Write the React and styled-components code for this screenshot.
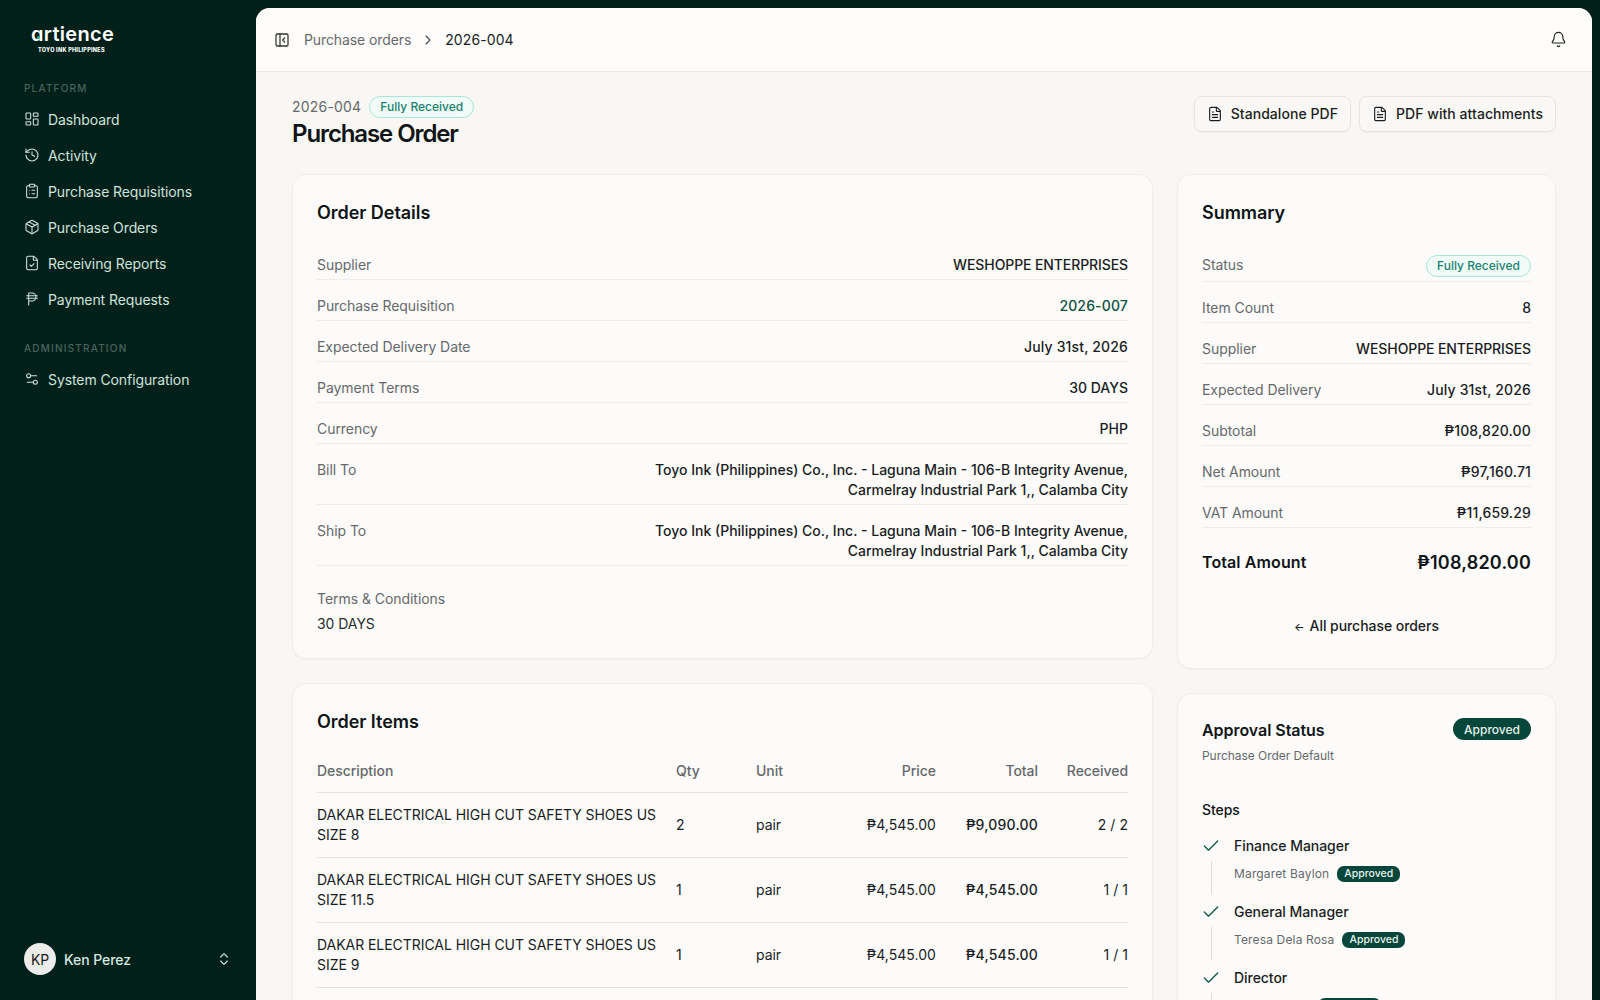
import React from "react";
import styled, { createGlobalStyle } from "styled-components";
import {
  LayoutDashboard, History, ClipboardList, Package, FileCheck, PhilippinePeso,
  Settings2, ChevronsUpDown, PanelLeftClose, Bell, FileText, Check, ChevronRight,
} from "lucide-react";

const Global = createGlobalStyle`
  html, body { margin: 0; padding: 0; height: 100%; overflow: hidden; background: #02201a; }
  body { font-family: Inter, "Liberation Sans", sans-serif; font-size: 14px; color: #0f1417; letter-spacing: -0.05px; }
  * { box-sizing: border-box; }
`;

const Shell = styled.div`display: flex; height: 1000px; overflow: hidden; background: #02201a;`;
const Sidebar = styled.aside`width: 256px; flex: none; display: flex; flex-direction: column; padding: 0 16px; color: #cfe3da;`;
const Logo = styled.div`height: 64px; padding: 22px 0 0 15px; display: flex; flex-direction: column; align-items: flex-start; color: #fff;`;
const LogoWord = styled.div`position: relative; font-size: 20px; line-height: 24px; font-weight: 600; letter-spacing: 0.3px; font-family: Inter, sans-serif;`;
const LogoDot = styled.span`position: absolute; left: 6px; top: 14px; width: 3px; height: 3px; border-radius: 50%; background: #2bb594;`;
const LogoSub = styled.div`font-size: 5.5px; line-height: 8px; font-weight: 800; letter-spacing: 0.25px; margin-left: 7px; margin-top: 0;`;
const NavLabel = styled.div`font-size: 10px; line-height: 16px; font-weight: 500; letter-spacing: 1.2px; color: #49635b; padding: 0 8px; margin-top: ${(p) => p.$mt}px; margin-bottom: 5px;`;
const NavItem = styled.div`display: flex; align-items: center; gap: 8px; height: 36px; padding: 0 8px; font-size: 14px; letter-spacing: -0.09px; color: #cfe3da; svg { flex: none; }`;
const Foot = styled.div`margin-top: auto; display: flex; align-items: center; padding: 0 8px; height: 32px; margin-bottom: 25px; gap: 8px;`;
const Avatar = styled.div`width: 32px; height: 32px; border-radius: 50%; background: #edecea; color: #1a1a1a; display: flex; align-items: center; justify-content: center; font-size: 14px;`;
const FootName = styled.div`flex: 1; font-size: 14px; font-weight: 500; color: #d5e8e0;`;

const Main = styled.main`flex: 1; min-width: 0; margin: 8px 8px 0 0; background: #f8f7f4; border-radius: 14px 14px 0 0; overflow: hidden;`;
const Header = styled.header`height: 64px; display: flex; align-items: center; padding: 0 25px 0 18px; background: #fdfcfa; border-bottom: 1px solid #e9e7e2;`;
const Crumbs = styled.div`display: flex; align-items: center; font-size: 14px; margin-left: 14px; flex: 1; color: #66696c; letter-spacing: -0.1px;`;
const CrumbSep = styled.span`display: flex; margin: 0 9px; color: #44474a;`;
const CrumbNow = styled.span`color: #1a1c1e; letter-spacing: 0.1px;`;

const Content = styled.div`padding: 24px 36px;`;
const TitleRow = styled.div`display: flex; justify-content: space-between; align-items: flex-start; margin-bottom: 24px;`;
const TitleMeta = styled.div`display: flex; align-items: center; gap: 8px; font-size: 14px; line-height: 22px; color: #66696c; letter-spacing: 0.2px;`;
const H1 = styled.h1`margin: 0; font-size: 24px; line-height: 32px; font-weight: 600; letter-spacing: -1.1px; color: #0f1417;`;
const Buttons = styled.div`display: flex; gap: 8px;`;
const Button = styled.button`height: 36px; display: flex; align-items: center; gap: 8px; padding: 0 12px 1px; font: 500 14px Inter, sans-serif; letter-spacing: 0.05px; color: #1b1e20; background: #f9f8f6; border: 1px solid #e6e4df; border-radius: 8px; box-shadow: 0 1px 2px rgba(0,0,0,.04);`;
const Soft = styled.span`display: inline-flex; align-items: center; height: 22px; padding: 0 10px; border-radius: 999px; font-size: 12px; font-weight: 500; letter-spacing: 0; color: #1a8273; background: #f1fbf8; border: 1px solid #a9e8d8;`;

const Grid = styled.div`display: grid; grid-template-columns: minmax(0, 1fr) 379px; gap: 24px; align-items: start;`;
const Column = styled.div`display: flex; flex-direction: column; gap: 24px;`;
const Card = styled.section`background: #fcfbf9; border: 1px solid #f0eeea; border-radius: 14px; padding: 24px; box-shadow: 0 1px 2px rgba(0,0,0,.025);`;
const CardTitle = styled.h2`margin: 0 0 ${(p) => p.$mb ?? 28}px; font-size: 18px; line-height: 28px; font-weight: 600; letter-spacing: -0.05px; color: #0f1417;`;
const Row = styled.div`display: flex; justify-content: space-between; gap: 24px; padding-bottom: 4px; margin-bottom: 16px; line-height: 20px; border-bottom: 1px solid #efede9; font-size: 14px;`;
const Label = styled.span`color: #66696c; flex: none;`;
const Value = styled.span`font-weight: 500; color: #1a1d1f; text-align: right; max-width: 480px; letter-spacing: ${(p) => p.$ls ?? 0}px;`;
const LinkValue = styled(Value)`color: #0d5141;`;
const Terms = styled.div`margin-top: 23px; line-height: 20px; color: #66696c;`;
const TermsValue = styled.div`margin-top: 5px; line-height: 20px; color: #2a2d2f;`;

const Table = styled.table`width: 100%; table-layout: fixed; border-collapse: collapse; font-size: 14px;`;
const Th = styled.th`height: 43px; padding: 0 8px; text-align: ${(p) => p.$r ? "right" : "left"}; font-weight: 500; color: #66696c; border-bottom: 1px solid #e6e4df; &:first-child { padding-left: 0; } &:last-child { padding-right: 0; }`;
const Td = styled.td`padding: 12px 8px; line-height: 20px; text-align: ${(p) => p.$r ? "right" : "left"}; font-weight: ${(p) => p.$b ? 500 : 400}; letter-spacing: ${(p) => p.$b ? "0.2px" : p.$r ? "0.05px" : "inherit"}; color: #1a1d1f; border-bottom: 1px solid #e6e4df; &:first-child { padding-left: 0; } &:last-child { padding-right: 0; }`;

const SumRow = styled(Row)`align-items: flex-start;`;
const TotalRow = styled.div`display: flex; justify-content: space-between; align-items: center; margin-top: 20px; height: 28px;`;
const TotalLabel = styled.span`font-size: 16px; font-weight: 600; letter-spacing: 0.1px;`;
const TotalValue = styled.span`font-size: 18px; font-weight: 600; letter-spacing: 0.2px;`;
const BackLink = styled.div`text-align: center; margin-top: 40px; margin-bottom: 7px; font-weight: 500; line-height: 20px; color: #1a1d1f;`;
const BackArrow = styled.span`font-size: 11px; margin-right: 5px;`;

const ApprovalHead = styled.div`display: flex; justify-content: space-between; align-items: flex-start;`;
const ApprovalTitle = styled.div`font-size: 16px; line-height: 24px; font-weight: 600;`;
const ApprovalSub = styled.div`font-size: 12px; line-height: 16px; margin-top: 6px; color: #66696c;`;
const Solid = styled.span`display: inline-flex; align-items: center; height: 22px; padding: 0 11px; border-radius: 999px; font-size: 12px; font-weight: 500; letter-spacing: 0; color: #e7f3ef; background: #07463a;`;
const SolidSmall = styled(Solid)`height: 16px; padding: 0 7px; border-radius: 7px; font-size: 10.5px;`;
const StepsTitle = styled.div`font-weight: 500; line-height: 20px; margin-top: 36px; margin-bottom: 16px;`;
const Step = styled.div`display: grid; grid-template-columns: 32px 1fr; height: 66px; position: relative;`;
const StepLine = styled.div`position: absolute; left: 9px; top: 25px; height: 33px; width: 1px; background: #dfddd8;`;
const StepIcon = styled.div`color: #0c5c48; margin-left: -1.5px; height: 20px;`;
const StepName = styled.div`font-weight: 500; line-height: 20px; color: #1a1d1f;`;
const StepWho = styled.div`display: flex; align-items: center; gap: 8px; margin-top: 10px; font-size: 12px; line-height: 16px; letter-spacing: 0.15px; color: #66696c;`;

const nav = [
  [LayoutDashboard, "Dashboard"], [History, "Activity"], [ClipboardList, "Purchase Requisitions"],
  [Package, "Purchase Orders"], [FileCheck, "Receiving Reports"], [PhilippinePeso, "Payment Requests"],
];
const address = <>Toyo Ink (Philippines) Co., Inc. - Laguna Main - 106-B Integrity Avenue,<br />Carmelray Industrial Park 1,, Calamba City</>;
const items = [
  ["DAKAR ELECTRICAL HIGH CUT SAFETY SHOES US SIZE 8", "2", "₱4,545.00", "₱9,090.00", "2 / 2"],
  ["DAKAR ELECTRICAL HIGH CUT SAFETY SHOES US SIZE 11.5", "1", "₱4,545.00", "₱4,545.00", "1 / 1"],
  ["DAKAR ELECTRICAL HIGH CUT SAFETY SHOES US SIZE 9", "1", "₱4,545.00", "₱4,545.00", "1 / 1"],
];
const summary = [
  ["Item Count", "8", 0], ["Supplier", "WESHOPPE ENTERPRISES", -0.1], ["Expected Delivery", "July 31st, 2026", 0.15],
  ["Subtotal", "₱108,820.00", 0.15], ["Net Amount", "₱97,160.71", 0.15], ["VAT Amount", "₱11,659.29", 0.15],
];
const steps = [["Finance Manager", "Margaret Baylon"], ["General Manager", "Teresa Dela Rosa"], ["Director", "Maria Santos"]];

export default function App() {
  return (
    <Shell>
      <Global />
      <Sidebar>
        <Logo>
          <LogoWord>ɑrtience<LogoDot /></LogoWord>
          <LogoSub>TOYO INK PHILIPPINES</LogoSub>
        </Logo>
        <NavLabel $mt={16}>PLATFORM</NavLabel>
        {nav.map(([I, t]) => <NavItem key={t}><I size={16} strokeWidth={1.6} />{t}</NavItem>)}
        <NavLabel $mt={23}>ADMINISTRATION</NavLabel>
        <NavItem><Settings2 size={16} strokeWidth={1.6} />System Configuration</NavItem>
        <Foot>
          <Avatar>KP</Avatar>
          <FootName>Ken Perez</FootName>
          <ChevronsUpDown size={16} strokeWidth={1.7} />
        </Foot>
      </Sidebar>
      <Main>
        <Header>
          <PanelLeftClose size={16} strokeWidth={1.9} color="#333" />
          <Crumbs>
            Purchase orders
            <CrumbSep><ChevronRight size={16} strokeWidth={1.6} /></CrumbSep>
            <CrumbNow>2026-004</CrumbNow>
          </Crumbs>
          <Bell size={17} strokeWidth={1.6} color="#222" />
        </Header>
        <Content>
          <TitleRow>
            <div>
              <TitleMeta>2026-004 <Soft>Fully Received</Soft></TitleMeta>
              <H1>Purchase Order</H1>
            </div>
            <Buttons>
              <Button><FileText size={16} strokeWidth={1.7} />Standalone PDF</Button>
              <Button><FileText size={16} strokeWidth={1.7} />PDF with attachments</Button>
            </Buttons>
          </TitleRow>
          <Grid>
            <Column>
              <Card>
                <CardTitle>Order Details</CardTitle>
                <Row><Label>Supplier</Label><Value $ls={-0.1}>WESHOPPE ENTERPRISES</Value></Row>
                <Row><Label>Purchase Requisition</Label><LinkValue $ls={0.15}>2026-007</LinkValue></Row>
                <Row><Label>Expected Delivery Date</Label><Value $ls={0.15}>July 31st, 2026</Value></Row>
                <Row><Label>Payment Terms</Label><Value>30 DAYS</Value></Row>
                <Row><Label>Currency</Label><Value>PHP</Value></Row>
                <Row><Label>Bill To</Label><Value>{address}</Value></Row>
                <Row><Label>Ship To</Label><Value>{address}</Value></Row>
                <Terms>Terms &amp; Conditions</Terms>
                <TermsValue>30 DAYS</TermsValue>
              </Card>
              <Card>
                <CardTitle $mb={13}>Order Items</CardTitle>
                <Table>
                  <colgroup>
                    <col style={{ width: 351 }} /><col style={{ width: 80 }} /><col style={{ width: 96 }} />
                    <col style={{ width: 100 }} /><col style={{ width: 102 }} /><col />
                  </colgroup>
                  <thead>
                    <tr><Th>Description</Th><Th>Qty</Th><Th>Unit</Th><Th $r>Price</Th><Th $r>Total</Th><Th $r>Received</Th></tr>
                  </thead>
                  <tbody>
                    {items.map((r) => (
                      <tr key={r[0]}>
                        <Td>{r[0]}</Td><Td>{r[1]}</Td><Td>pair</Td>
                        <Td $r>{r[2]}</Td><Td $r $b>{r[3]}</Td><Td $r>{r[4]}</Td>
                      </tr>
                    ))}
                  </tbody>
                </Table>
              </Card>
            </Column>
            <Column>
              <Card>
                <CardTitle>Summary</CardTitle>
                <SumRow><Label>Status</Label><Soft>Fully Received</Soft></SumRow>
                {summary.map(([l, v, ls]) => <Row key={l}><Label>{l}</Label><Value $ls={ls}>{v}</Value></Row>)}
                <TotalRow><TotalLabel>Total Amount</TotalLabel><TotalValue>₱108,820.00</TotalValue></TotalRow>
                <BackLink><BackArrow>←</BackArrow>All purchase orders</BackLink>
              </Card>
              <Card>
                <ApprovalHead>
                  <div>
                    <ApprovalTitle>Approval Status</ApprovalTitle>
                    <ApprovalSub>Purchase Order Default</ApprovalSub>
                  </div>
                  <Solid>Approved</Solid>
                </ApprovalHead>
                <StepsTitle>Steps</StepsTitle>
                {steps.map(([n, w]) => (
                  <Step key={n}>
                    <StepLine />
                    <StepIcon><Check size={20} strokeWidth={1.6} /></StepIcon>
                    <div>
                      <StepName>{n}</StepName>
                      <StepWho>{w}<SolidSmall>Approved</SolidSmall></StepWho>
                    </div>
                  </Step>
                ))}
              </Card>
            </Column>
          </Grid>
        </Content>
      </Main>
    </Shell>
  );
}
